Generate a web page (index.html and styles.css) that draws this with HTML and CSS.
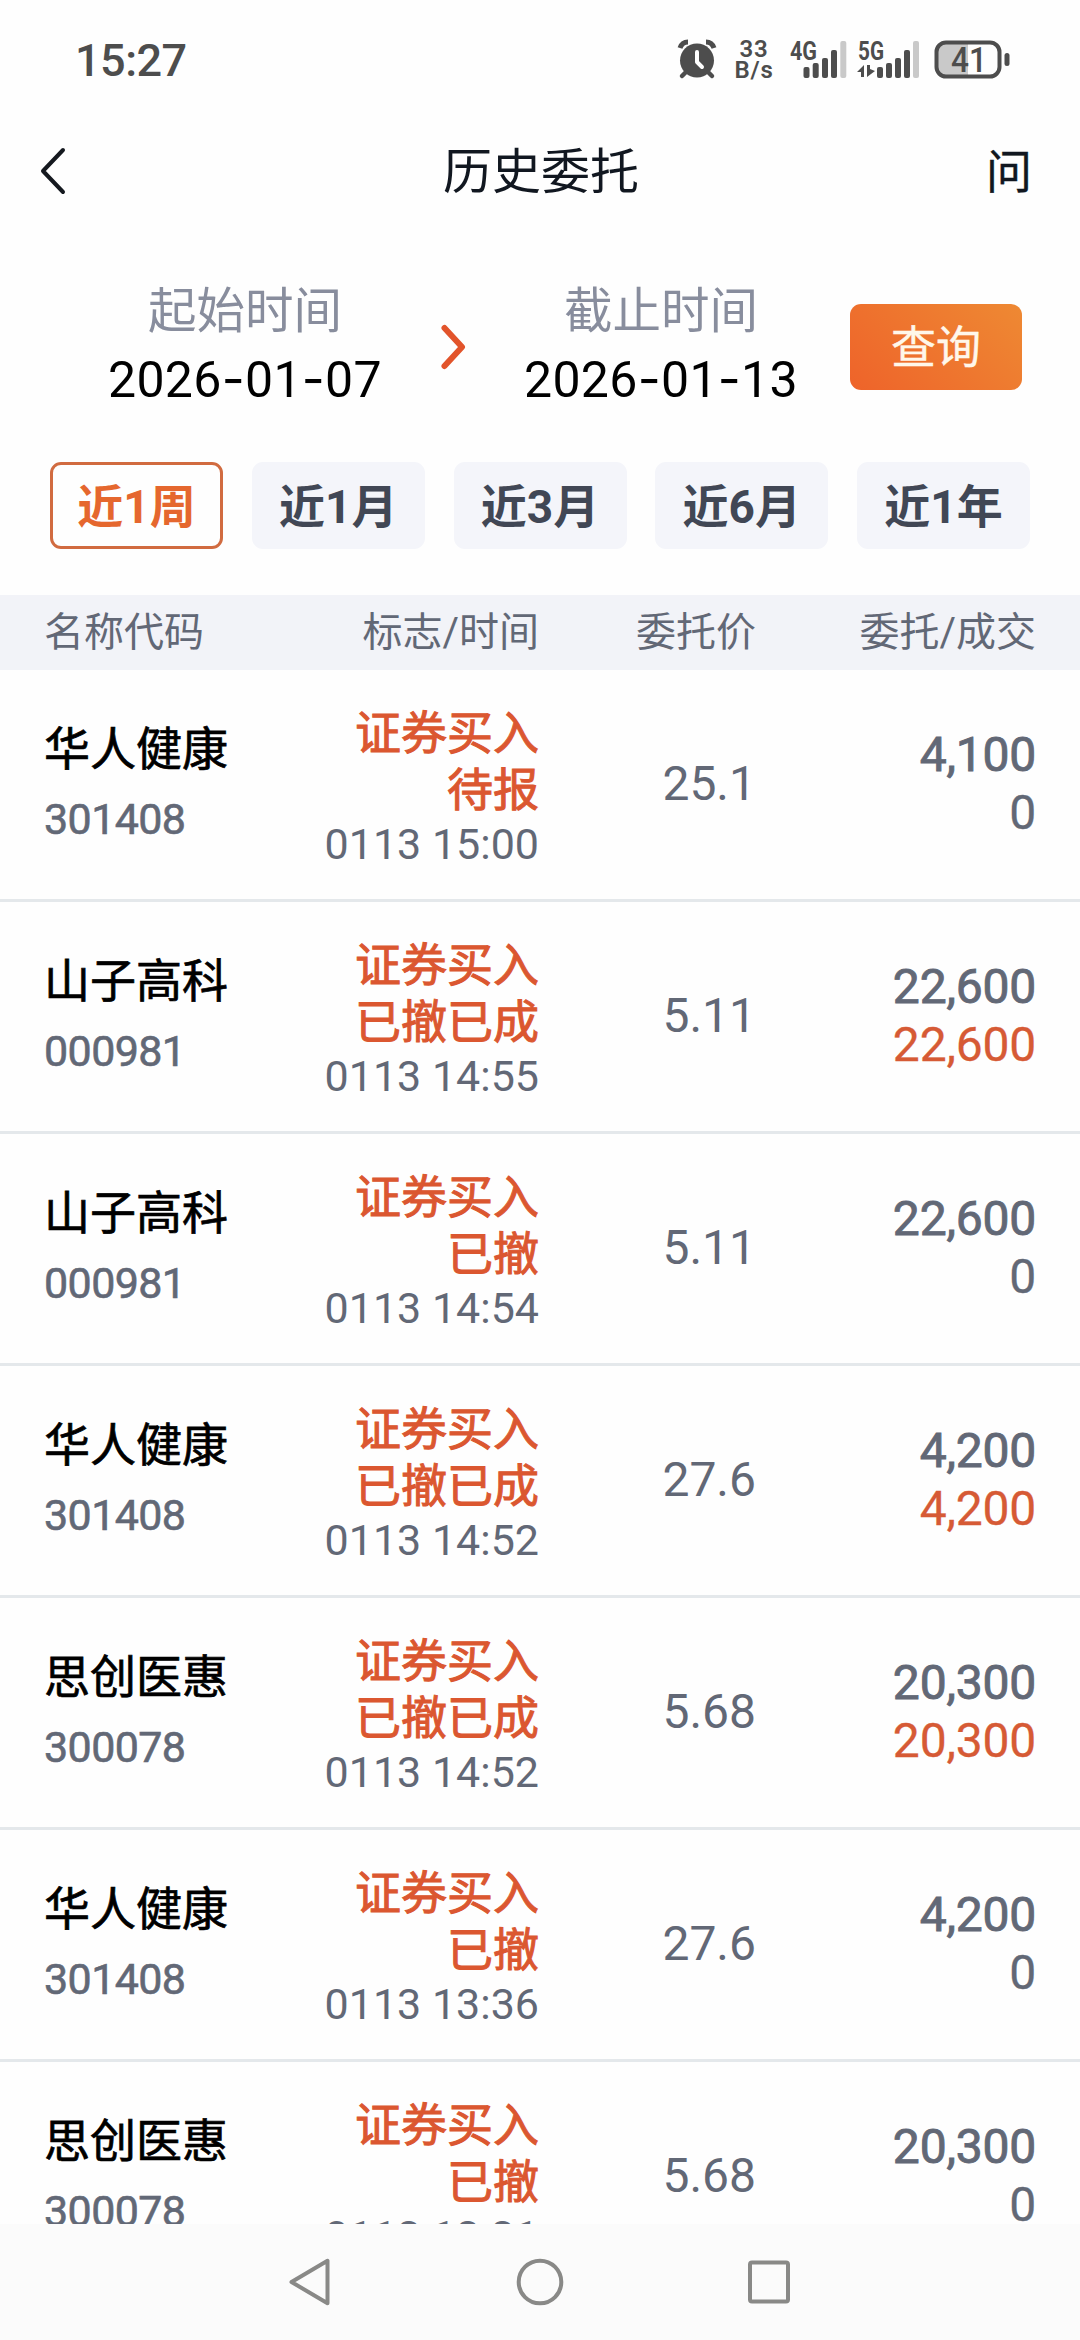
FILE: index.html
```html
<!DOCTYPE html>
<html lang="zh-CN">
<head>
    <meta charset="UTF-8">
    <meta name="viewport" content="width=device-width, initial-scale=1.0">
    <title>历史委托</title>
    <link rel="stylesheet" href="styles.css">
</head>
<body>
    <div class="statusBar">
        <span class="clock">15:27</span>
        <div class="statusIcons">
            <svg class="alarm" width="38" height="40" viewBox="0 0 38 40">
                <circle cx="19" cy="21.5" r="17" fill="#4d4d4d"/>
                <path d="M2 9 Q4 3 10 3 M36 9 Q34 3 28 3" fill="none" stroke="#4d4d4d" stroke-width="5"/>
                <path d="M8 33 L4 37 M30 33 L34 37" stroke="#4d4d4d" stroke-width="4.5" stroke-linecap="round"/>
                <path d="M19 13 V23 L24 28" fill="none" stroke="#fff" stroke-width="4" stroke-linecap="round" stroke-linejoin="round"/>
            </svg>
            <div class="speed">
                <span>33</span>
                <span>B/s</span>
            </div>
            <svg class="signal4" width="58" height="40" viewBox="0 0 58 40">
                <text x="0" y="20.5" class="net" textLength="27" lengthAdjust="spacingAndGlyphs">4G</text>
                <rect x="13.5" y="28" width="6" height="11" rx="2"/>
                <rect x="22.7" y="24" width="6" height="15" rx="2"/>
                <rect x="32" y="19" width="6" height="20" rx="2"/>
                <rect x="41" y="11" width="6" height="28" rx="2"/>
                <rect x="50.3" y="2" width="6" height="37" rx="2" class="off"/>
            </svg>
            <svg class="signal5" width="64" height="40" viewBox="0 0 64 40">
                <text x="1" y="20.5" class="net" textLength="26" lengthAdjust="spacingAndGlyphs">5G</text>
                <path d="M0 33 L7 26 V38 H4 V33 Z M10 26 H13 V30 L18 32 L10 38 Z"/>
                <rect x="20" y="28" width="6" height="11" rx="2"/>
                <rect x="29" y="24" width="6" height="15" rx="2"/>
                <rect x="38" y="19" width="6" height="20" rx="2"/>
                <rect x="47" y="11" width="6" height="28" rx="2"/>
                <rect x="56" y="2" width="6" height="37" rx="2" class="off"/>
            </svg>
            <svg class="battery" width="76" height="40" viewBox="0 0 76 40">
                <path d="M34 4 H13 Q3 4 3 14 V27 Q3 37 13 37 H34 Z" fill="#c9c9c9"/>
                <rect x="2.5" y="3.5" width="63" height="34" rx="9.5" fill="none" stroke="#4d4d4d" stroke-width="4"/>
                <rect x="70.500" y="14" width="5" height="13" rx="2.5"/>
                <text x="17" y="33" class="level" textLength="36" lengthAdjust="spacingAndGlyphs">41</text>
            </svg>
        </div>
    </div>

    <div class="header">
        <svg class="back" width="28" height="48" viewBox="0 0 28 48">
            <path d="M24 3 L4 24 L24 45" fill="none" stroke="#15191f" stroke-width="4" stroke-linecap="round" stroke-linejoin="round"/>
        </svg>
        <h1>历史委托</h1>
        <span class="ask">问</span>
    </div>

    <div class="query">
        <div class="date">
            <span class="label">起始时间</span>
            <span class="value">2026<i>-</i>01<i>-</i>07</span>
        </div>
        <svg class="arrow" width="28" height="48" viewBox="0 0 28 48">
            <path d="M4.500 5 L22 24 L4.500 43" fill="none" stroke="#e2542b" stroke-width="6" stroke-linecap="round" stroke-linejoin="round"/>
        </svg>
        <div class="date">
            <span class="label">截止时间</span>
            <span class="value">2026<i>-</i>01<i>-</i>13</span>
        </div>
        <button class="search">查询</button>
    </div>

    <div class="ranges">
        <button class="active">近1周</button>
        <button>近1月</button>
        <button>近3月</button>
        <button>近6月</button>
        <button>近1年</button>
    </div>

    <div class="row tableHead">
        <span>名称代码</span>
        <span>标志/时间</span>
        <span>委托价</span>
        <span>委托/成交</span>
    </div>

    <div class="list">
        <div class="row order">
            <div class="stock"><b>华人健康</b><span>301408</span></div>
            <div class="flag"><b>证券买入</b><b>待报</b><span>0113 15:00</span></div>
            <div class="price">25.1</div>
            <div class="amount"><b>4,100</b><span>0</span></div>
        </div>
        <div class="row order">
            <div class="stock"><b>山子高科</b><span>000981</span></div>
            <div class="flag"><b>证券买入</b><b>已撤已成</b><span>0113 14:55</span></div>
            <div class="price">5.11</div>
            <div class="amount"><b>22,600</b><span class="done">22,600</span></div>
        </div>
        <div class="row order">
            <div class="stock"><b>山子高科</b><span>000981</span></div>
            <div class="flag"><b>证券买入</b><b>已撤</b><span>0113 14:54</span></div>
            <div class="price">5.11</div>
            <div class="amount"><b>22,600</b><span>0</span></div>
        </div>
        <div class="row order">
            <div class="stock"><b>华人健康</b><span>301408</span></div>
            <div class="flag"><b>证券买入</b><b>已撤已成</b><span>0113 14:52</span></div>
            <div class="price">27.6</div>
            <div class="amount"><b>4,200</b><span class="done">4,200</span></div>
        </div>
        <div class="row order">
            <div class="stock"><b>思创医惠</b><span>300078</span></div>
            <div class="flag"><b>证券买入</b><b>已撤已成</b><span>0113 14:52</span></div>
            <div class="price">5.68</div>
            <div class="amount"><b>20,300</b><span class="done">20,300</span></div>
        </div>
        <div class="row order">
            <div class="stock"><b>华人健康</b><span>301408</span></div>
            <div class="flag"><b>证券买入</b><b>已撤</b><span>0113 13:36</span></div>
            <div class="price">27.6</div>
            <div class="amount"><b>4,200</b><span>0</span></div>
        </div>
        <div class="row order">
            <div class="stock"><b>思创医惠</b><span>300078</span></div>
            <div class="flag"><b>证券买入</b><b>已撤</b><span>0113 13:31</span></div>
            <div class="price">5.68</div>
            <div class="amount"><b>20,300</b><span>0</span></div>
        </div>
    </div>

    <div class="navBar">
        <svg width="48" height="52" viewBox="0 0 48 52">
            <path d="M4.500 26 L40.500 4.800 V47.200 Z"/>
        </svg>
        <svg width="48" height="52" viewBox="0 0 48 52">
            <circle cx="24" cy="26" r="21.300"/>
        </svg>
        <svg width="48" height="52" viewBox="0 0 48 52">
            <rect x="5" y="6.500" width="38" height="39" rx="2"/>
        </svg>
    </div>
</body>
</html>
```

FILE: styles.css
```css
* {
    box-sizing: border-box;
}
body {
    display: flex;
    flex-direction: column;
    width: 1080px;
    height: 2340px;
    margin: 0;
    overflow: hidden;
    background-color: #fefefe;
    font-family: Roboto, 'Noto Sans CJK SC', sans-serif;
    color: #626876;
}
button {
    padding: 0;
    border: none;
    font-family: inherit;
}

/* status bar */
.statusBar {
    display: flex;
    justify-content: space-between;
    height: 120px;
    padding: 39px 70px 0 75px;
    color: #4d4d4d;
}
.clock {
    font-size: 45px;
    font-weight: 500;
    line-height: 43px;
    letter-spacing: -0.5px;
}
.statusIcons {
    display: flex;
    height: 40px;
    fill: #4d4d4d;
}
.statusIcons svg {
    overflow: visible;
}
.alarm {
    margin-right: 18px;
}
.speed {
    display: flex;
    flex-direction: column;
    align-items: center;
    width: 40px;
    margin-right: 16px;
    font-size: 24px;
    font-weight: 600;
    line-height: 21px;
    letter-spacing: 0.8px;
}
.signal4 {
    margin-right: 9px;
}
.signal5 {
    margin-right: 13px;
}
.net {
    font-size: 26px;
    font-weight: 700;
}
.level {
    font-size: 35px;
    font-weight: 500;
}
.off {
    fill: #c9c9c9;
}

/* title */
.header {
    display: flex;
    justify-content: space-between;
    align-items: center;
    height: 102px;
    padding: 0 48px 0 39px;
    color: #111720;
}
.header h1 {
    margin: 4px 0 0 29px;
    font-size: 49px;
    font-weight: 400;
    line-height: 60px;
}
.ask {
    margin-bottom: 7px;
    font-size: 46px;
    -webkit-text-stroke: 0.4px #111720;
}

/* date query */
.query {
    display: flex;
    align-items: flex-start;
    height: 240px;
    padding: 57px 58px 0 103px;
}
.date {
    display: flex;
    flex-direction: column;
    align-items: center;
    width: 284px;
}
.label {
    font-size: 48.5px;
    line-height: 66px;
    color: #888d9d;
}
.value {
    font-size: 50px;
    line-height: 68px;
    letter-spacing: 0.3px;
    color: #000;
    white-space: nowrap;
}
.value i {
    font-family: Inter, sans-serif;
    font-style: normal;
}
.arrow {
    margin: 44px 51px 0 53px;
}
.search {
    width: 172px;
    height: 86px;
    margin: 25px 0 0 auto;
    padding-bottom: 5px;
    border-radius: 11px;
    background: linear-gradient(45deg, #ee632a, #ee8933);
    color: #fff7ea;
    font-size: 45px;
    -webkit-text-stroke: 0.4px #fff7ea;
}

/* range buttons */
.ranges {
    display: flex;
    justify-content: space-between;
    height: 133px;
    padding: 0 50px;
}
.ranges button {
    width: 173px;
    height: 87px;
    padding-bottom: 6px;
    border-radius: 11px;
    background-color: #f4f5fa;
    color: #414755;
    font-size: 46px;
    font-weight: 700;
}
.ranges .active {
    border: 3px solid #d16b40;
    background-color: #fefefe;
    color: #e5672e;
}

/* order table */
.row {
    display: grid;
    grid-template-columns: 244px 251px 217px 280px;
    padding: 0 44px;
}
.row > * {
    text-align: right;
}
.row > :first-child {
    text-align: left;
}
.tableHead {
    height: 75px;
    background-color: #f2f3f8;
    font-size: 40px;
    line-height: 75px;
}
.list {
    flex: 1;
    min-height: 0;
    overflow: hidden;
}
.order {
    height: 232px;
    border-bottom: 3px solid #e4e8eb;
}
.order b,
.order span {
    display: block;
    font-weight: 400;
}
.stock b {
    margin-top: 43px;
    font-size: 46px;
    line-height: 72px;
    color: #000;
    -webkit-text-stroke: 0.7px #000;
}
.stock span {
    font-size: 43px;
    line-height: 69px;
    letter-spacing: -0.6px;
    -webkit-text-stroke: 0.6px #626876;
}
.flag {
    padding-top: 35px;
}
.flag b {
    font-size: 46px;
    line-height: 57px;
    color: #db5730;
    -webkit-text-stroke: 1px #db5730;
}
.flag span {
    font-size: 43px;
    line-height: 51px;
}
.price {
    font-size: 48px;
    line-height: 228px;
}
.amount {
    padding-top: 56px;
}
.amount b,
.amount span {
    font-size: 48px;
    line-height: 58px;
    letter-spacing: -0.2px;
}
.amount b {
    -webkit-text-stroke: 0.9px #626876;
}
.amount span {
    -webkit-text-stroke: 0.3px currentColor;
}
.amount .done {
    color: #d65a35;
}

/* system navigation */
.navBar {
    display: flex;
    justify-content: center;
    gap: 181px;
    height: 116px;
    padding-top: 32px;
    background-color: #fbfbfb;
}
.navBar svg {
    fill: none;
    stroke: #898987;
    stroke-width: 4;
    stroke-linejoin: round;
}
```
